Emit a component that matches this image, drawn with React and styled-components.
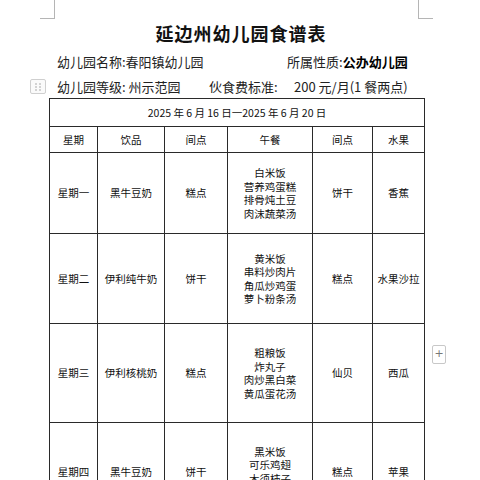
import React from "react";
import styled, { createGlobalStyle } from "styled-components";

const GlobalStyle = createGlobalStyle`
  html, body {
    margin: 0;
    padding: 0;
    background: #ffffff;
  }
`;

const days = [
  {
    day: "星期一",
    drink: "黑牛豆奶",
    snack: "糕点",
    lunch: ["白米饭", "营养鸡蛋糕", "排骨炖土豆", "肉沫蔬菜汤"],
    snack2: "饼干",
    fruit: "香蕉",
    height: 81,
  },
  {
    day: "星期二",
    drink: "伊利纯牛奶",
    snack: "饼干",
    lunch: ["黄米饭", "串料炒肉片", "角瓜炒鸡蛋", "萝卜粉条汤"],
    snack2: "糕点",
    fruit: "水果沙拉",
    height: 90,
  },
  {
    day: "星期三",
    drink: "伊利核桃奶",
    snack: "糕点",
    lunch: ["粗粮饭", "炸丸子", "肉炒黑白菜", "黄瓜蛋花汤"],
    snack2: "仙贝",
    fruit: "西瓜",
    height: 99,
  },
  {
    day: "星期四",
    drink: "黑牛豆奶",
    snack: "饼干",
    lunch: ["黑米饭", "可乐鸡翅", "木须柿子", "紫菜蛋花汤"],
    snack2: "糕点",
    fruit: "苹果",
    height: 98,
  },
];

export default function App() {
  return (
    <>
      <GlobalStyle />
      <Page>
        <CornerMark side="left" />
        <CornerMark side="right" />
        <Title>延边州幼儿园食谱表</Title>
        <InfoLine top={4} height={26}>
          <InfoItem width={230}>幼儿园名称:春阳镇幼儿园</InfoItem>
          <InfoItem>
            所属性质:<Strong>公办幼儿园</Strong>
          </InfoItem>
        </InfoLine>
        <InfoLine height={24}>
          <MoveHandle>
            <svg width="8" height="8" viewBox="0 0 8 8">
              {[1, 4, 7].map((y) =>
                [2, 6].map((x) => (
                  <rect key={`${x}-${y}`} x={x - 0.6} y={y - 0.6} width="1.2" height="1.2" fill="#8a8a8a" />
                ))
              )}
            </svg>
          </MoveHandle>
          <InfoItem width={152}>幼儿园等级: 州示范园</InfoItem>
          <InfoItem width={85}>伙食费标准:</InfoItem>
          <InfoItem>200 元/月(1 餐两点)</InfoItem>
        </InfoLine>
        <TableWrap>
          <Menu>
            <colgroup>
              <col style={{ width: 48 }} />
              <col style={{ width: 67 }} />
              <col style={{ width: 63 }} />
              <col style={{ width: 85 }} />
              <col style={{ width: 60 }} />
              <col style={{ width: 52 }} />
            </colgroup>
            <tbody>
              <Row height={28}>
                <Cell colSpan={6}>2025 年 6 月 16 日一2025 年 6 月 20 日</Cell>
              </Row>
              <Row height={26}>
                <Cell>星期</Cell>
                <Cell>饮品</Cell>
                <Cell>间点</Cell>
                <Cell>午餐</Cell>
                <Cell>间点</Cell>
                <Cell>水果</Cell>
              </Row>
              {days.map((d) => (
                <Row key={d.day} height={d.height}>
                  <Cell>{d.day}</Cell>
                  <Cell>{d.drink}</Cell>
                  <Cell>{d.snack}</Cell>
                  <Cell>
                    {d.lunch.map((l) => (
                      <LunchLine key={l}>{l}</LunchLine>
                    ))}
                  </Cell>
                  <Cell>{d.snack2}</Cell>
                  <Cell>{d.fruit}</Cell>
                </Row>
              ))}
            </tbody>
          </Menu>
          <AddHandle>+</AddHandle>
        </TableWrap>
      </Page>
    </>
  );
}

const Page = styled.div`
  position: relative;
  width: 480px;
  height: 480px;
  overflow: hidden;
  background: #ffffff;
  color: #1a1a1a;
  font-family: "Noto Sans CJK SC", "Noto Sans", sans-serif;
`;

const CornerMark = styled.div`
  position: absolute;
  top: 0;
  ${(p) => (p.side === "left" ? "left: 40px;" : "left: 418px;")}
  width: 14px;
  height: 18px;
  ${(p) =>
    p.side === "left"
      ? "border-right: 1px solid #b5b5b5;"
      : "border-left: 1px solid #b5b5b5;"}
  border-bottom: 1px solid #b5b5b5;
`;

const Title = styled.h1`
  margin: 22px 0 0;
  padding-left: 2px;
  font-size: 18px;
  line-height: 22px;
  font-weight: 700;
  letter-spacing: 1px;
  text-align: center;
  color: #111;
`;

const InfoLine = styled.div`
  position: relative;
  display: flex;
  align-items: center;
  height: ${(p) => p.height}px;
  margin-top: ${(p) => p.top || 0}px;
  padding-left: 57px;
  font-size: 13px;
  color: #222;
`;

const InfoItem = styled.span`
  flex: none;
  width: ${(p) => (p.width ? `${p.width}px` : "auto")};
  white-space: nowrap;
`;

const Strong = styled.b`
  font-weight: 700;
  color: #000;
`;

const MoveHandle = styled.span`
  position: absolute;
  left: 30px;
  top: 5px;
  width: 14px;
  height: 13px;
  border: 1px solid #cfcfcf;
  border-radius: 2px;
  display: flex;
  align-items: center;
  justify-content: center;
  background: #fafafa;
`;

const TableWrap = styled.div`
  position: relative;
  padding-left: 49px;
`;

const Menu = styled.table`
  width: 375px;
  border-collapse: collapse;
  table-layout: fixed;
  font-size: 10.5px;
  color: #111;
`;

const Row = styled.tr`
  height: ${(p) => p.height}px;
`;

const Cell = styled.td`
  border: 1px solid #2a2a2a;
  padding: 0;
  text-align: center;
  vertical-align: middle;
  line-height: 14px;
  white-space: nowrap;
`;

const LunchLine = styled.div`
  line-height: 13.5px;
`;

const AddHandle = styled.span`
  position: absolute;
  left: 432px;
  top: 247px;
  width: 12px;
  height: 17px;
  border: 1px solid #c8c8c8;
  border-radius: 2px;
  font-family: "DejaVu Sans", sans-serif;
  font-size: 11px;
  line-height: 16px;
  text-align: center;
  color: #777;
  background: #fff;
`;
